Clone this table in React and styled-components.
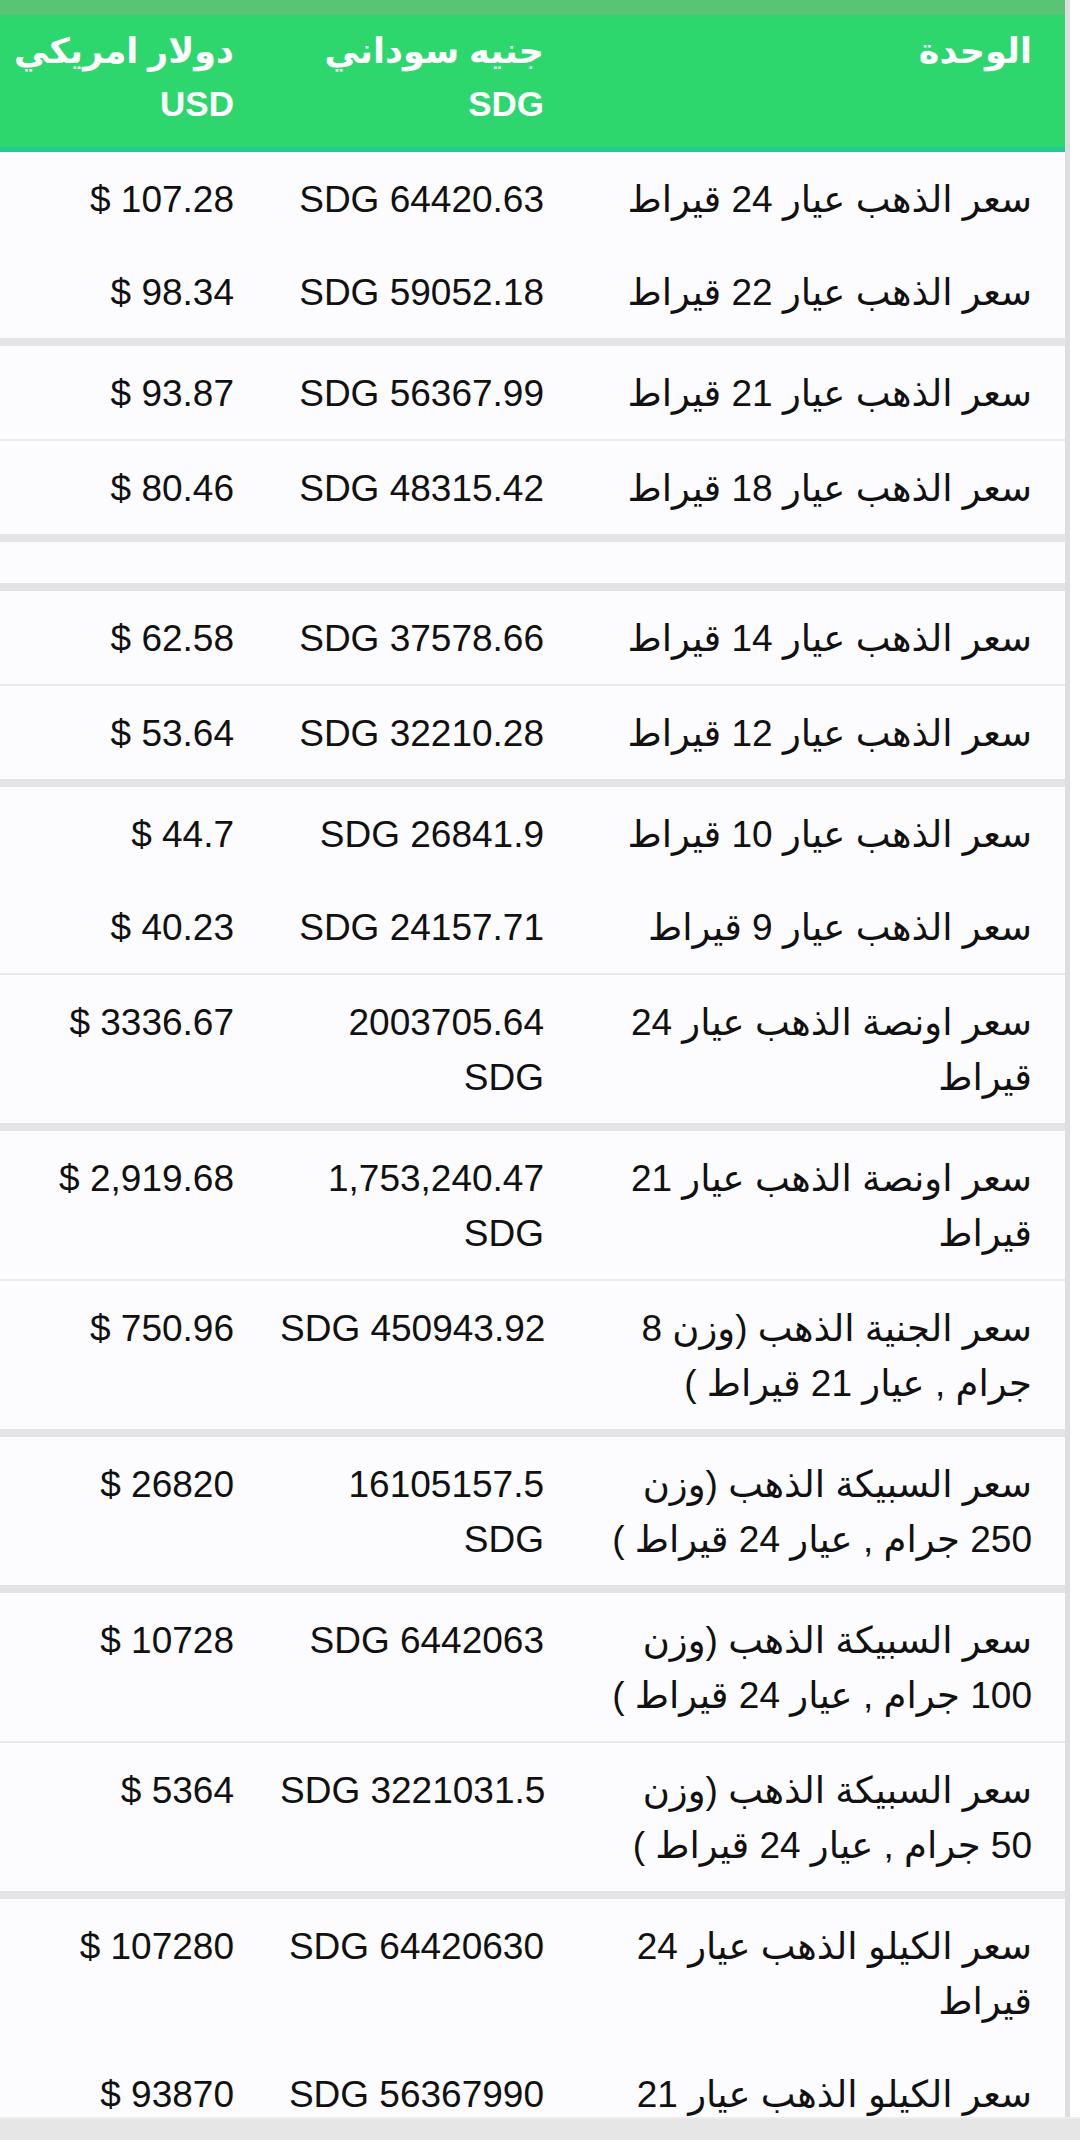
import React from 'react';
import styled, { createGlobalStyle } from 'styled-components';

const Global = createGlobalStyle`
  html, body { margin: 0; padding: 0; background: #ffffff; }
  body {
    font-family: "Liberation Sans", "DejaVu Sans", Arial, sans-serif;
    color: #111111;
  }
`;

const COLS = '483px 310px 272px';

const Page = styled.div`
  width: 1080px;
  min-height: 2140px;
  background: #ffffff;
`;

const Table = styled.div`
  width: 1070px;
  box-sizing: border-box;
  direction: rtl;
  border-right: 5px solid #dedee0;
`;

const Head = styled.div`
  display: grid;
  grid-template-columns: ${COLS};
  background: #2ed66e;
  border-top: 15px solid #58c474;
  border-bottom: 5px solid #22c994;
  box-shadow: 0 1px 0 #d6f3e8;
  color: #ffffff;
  font-weight: 700;
  font-size: 35px;
  line-height: 53px;
`;

const HeadCell = styled.div`
  padding: 9px 0 17px 8px;
  padding-right: ${(p) => (p.$first ? 33 : 38)}px;
  text-align: right;
  white-space: nowrap;
`;

const sepStyle = {
  thick: '8px solid #e4e4e7',
  thin: '2px solid #e9e9eb',
  none: '0 none',
};

const Row = styled.div`
  display: grid;
  grid-template-columns: ${COLS};
  background: #fcfbfe;
  border-bottom: ${(p) => sepStyle[p.$sep || 'none']};
  font-size: 37px;
  line-height: 55px;
`;

const EmptyRow = styled.div`
  height: 41px;
  background: #fcfbfe;
  border-bottom: ${(p) => sepStyle[p.$sep || 'none']};
`;

const Cell = styled.div`
  padding: 20px 0 18px 8px;
  padding-right: ${(p) => (p.$first ? 33 : 38)}px;
  text-align: right;
  white-space: nowrap;
`;

const Line = styled.span`
  display: block;
  direction: ${(p) => (p.$ltr ? 'ltr' : 'rtl')};
  text-align: right;
`;

const BottomBar = styled.div`
  position: fixed;
  left: 0;
  right: 0;
  bottom: 0;
  height: 21px;
  background: #e6e6e7;
  border-top: 2px solid #ededee;
`;

const rows = [
  { u: ['سعر الذهب عيار 24 قيراط'], s: ['SDG 64420.63'], d: ['$ 107.28'], sep: 'none' },
  { u: ['سعر الذهب عيار 22 قيراط'], s: ['SDG 59052.18'], d: ['$ 98.34'], sep: 'thick' },
  { u: ['سعر الذهب عيار 21 قيراط'], s: ['SDG 56367.99'], d: ['$ 93.87'], sep: 'thin' },
  { u: ['سعر الذهب عيار 18 قيراط'], s: ['SDG 48315.42'], d: ['$ 80.46'], sep: 'thick' },
  { empty: true, sep: 'thick' },
  { u: ['سعر الذهب عيار 14 قيراط'], s: ['SDG 37578.66'], d: ['$ 62.58'], sep: 'thin' },
  { u: ['سعر الذهب عيار 12 قيراط'], s: ['SDG 32210.28'], d: ['$ 53.64'], sep: 'thick' },
  { u: ['سعر الذهب عيار 10 قيراط'], s: ['SDG 26841.9'], d: ['$ 44.7'], sep: 'none' },
  { u: ['سعر الذهب عيار 9 قيراط'], s: ['SDG 24157.71'], d: ['$ 40.23'], sep: 'thin' },
  { u: ['سعر اونصة الذهب عيار 24', 'قيراط'], s: ['2003705.64', 'SDG'], d: ['$ 3336.67'], sep: 'thick' },
  { u: ['سعر اونصة الذهب عيار 21', 'قيراط'], s: ['1,753,240.47', 'SDG'], d: ['$ 2,919.68'], sep: 'thin' },
  { u: ['سعر الجنية الذهب (وزن 8', 'جرام , عيار 21 قيراط )'], s: ['SDG 450943.92'], d: ['$ 750.96'], sep: 'thick' },
  { u: ['سعر السبيكة الذهب (وزن', '250 جرام , عيار 24 قيراط )'], s: ['16105157.5', 'SDG'], d: ['$ 26820'], sep: 'thick' },
  { u: ['سعر السبيكة الذهب (وزن', '100 جرام , عيار 24 قيراط )'], s: ['SDG 6442063'], d: ['$ 10728'], sep: 'thin' },
  { u: ['سعر السبيكة الذهب (وزن', '50 جرام , عيار 24 قيراط )'], s: ['SDG 3221031.5'], d: ['$ 5364'], sep: 'thick' },
  { u: ['سعر الكيلو الذهب عيار 24', 'قيراط'], s: ['SDG 64420630'], d: ['$ 107280'], sep: 'none' },
  { u: ['سعر الكيلو الذهب عيار 21', 'قيراط'], s: ['SDG 56367990'], d: ['$ 93870'], sep: 'none' },
];

const Lines = ({ lines, ltr }) =>
  lines.map((t, i) => (
    <Line key={i} $ltr={ltr}>
      {t}
    </Line>
  ));

export default function App() {
  return (
    <Page>
      <Global />
      <Table>
        <Head>
          <HeadCell $first>الوحدة</HeadCell>
          <HeadCell>
            <Line>جنيه سوداني</Line>
            <Line>SDG</Line>
          </HeadCell>
          <HeadCell>
            <Line>دولار امريكي</Line>
            <Line>USD</Line>
          </HeadCell>
        </Head>
        {rows.map((r, i) =>
          r.empty ? (
            <EmptyRow key={i} $sep={r.sep} />
          ) : (
            <Row key={i} $sep={r.sep}>
              <Cell $first>
                <Lines lines={r.u} />
              </Cell>
              <Cell>
                <Lines lines={r.s} ltr />
              </Cell>
              <Cell>
                <Lines lines={r.d} ltr />
              </Cell>
            </Row>
          )
        )}
      </Table>
      <BottomBar />
    </Page>
  );
}
